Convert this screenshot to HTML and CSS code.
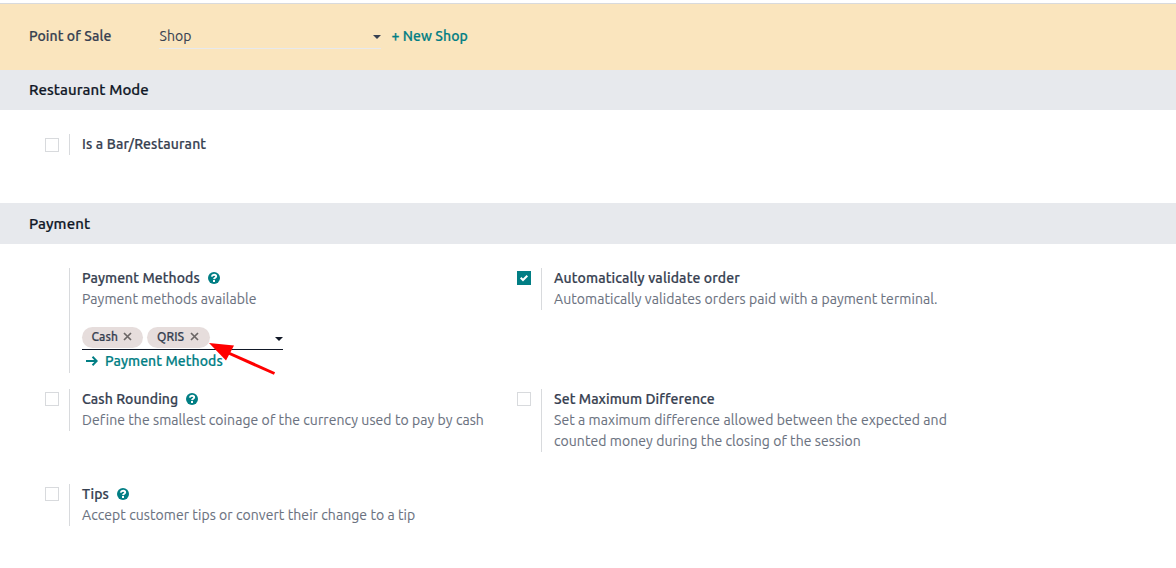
FILE: index.html
```
<!DOCTYPE html>
<html lang="en">
<head>
<meta charset="utf-8">
<title>Point of Sale Settings</title>
<link rel="stylesheet" href="styles.css">
</head>
<body>
<svg class="defs" aria-hidden="true">
  <symbol id="help" viewBox="0 0 12 12">
    <circle cx="6" cy="6" r="6" fill="#017e84"/>
    <path d="M3.7 4.600C4 3.300 4.900 2.800 6.100 2.800C7.400 2.800 8.200 3.500 8.200 4.500C8.200 5.800 6.200 5.800 6 7.200" fill="none" stroke="#fff" stroke-width="1.900"/>
    <path d="M5 8h2v2H5z" fill="#fff"/>
  </symbol>
  <symbol id="caret" viewBox="0 0 8 4"><path d="M0 0h8L4 4z" fill="currentColor"/></symbol>
  <symbol id="cross" viewBox="0 0 9 9"><path d="M1 1l7 7M8 1l-7 7" stroke="currentColor" stroke-width="1.700"/></symbol>
</svg>
<main class="settings">
  <header class="shop-bar">
    <label class="title shop-label">Point of Sale</label>
    <div class="select"><span>Shop</span><svg class="caret"><use href="#caret"/></svg></div>
    <a class="link">+ New Shop</a>
  </header>

  <h2 class="section-title">Restaurant Mode</h2>
  <section class="grid restaurant">
    <div class="setting">
      <div class="check-col"><span class="checkbox low"></span></div>
      <div class="body"><div class="title wide">Is a Bar/Restaurant</div></div>
    </div>
  </section>

  <h2 class="section-title tall">Payment</h2>
  <section class="grid payment">
    <div class="setting">
      <div class="check-col"></div>
      <div class="body">
        <div class="title">Payment Methods<svg class="help"><use href="#help"/></svg></div>
        <div class="desc">Payment methods available</div>
        <div class="tags">
          <span class="tag cash">Cash<svg class="cross"><use href="#cross"/></svg></span>
          <span class="tag qris">QRIS<svg class="cross"><use href="#cross"/></svg></span>
          <svg class="caret"><use href="#caret"/></svg>
          <svg class="pointer" viewBox="0 0 68 34"><path d="M15 8l50.500 22.500" stroke="#f00" stroke-width="3"/><path d="M0 0L25 2.500L17 17.500z" fill="#f00"/></svg>
        </div>
        <a class="link methods-link"><svg class="arrow" viewBox="0 0 12 10"><path d="M0 5h11M6.500 0.800l4.200 4.200l-4.200 4.200" fill="none" stroke="currentColor" stroke-width="2"/></svg>Payment Methods</a>
      </div>
    </div>
    <div class="setting">
      <div class="check-col"><span class="checkbox checked"><svg viewBox="0 0 14 14"><path d="M3.700 6.700l2.300 2.300l4.300-4.300" fill="none" stroke="#fff" stroke-width="2"/></svg></span></div>
      <div class="body">
        <div class="title wide">Automatically validate order</div>
        <div class="desc">Automatically validates orders paid with a payment terminal.</div>
      </div>
    </div>
    <div class="setting">
      <div class="check-col"><span class="checkbox"></span></div>
      <div class="body">
        <div class="title">Cash Rounding<svg class="help"><use href="#help"/></svg></div>
        <div class="desc">Define the smallest coinage of the currency used to pay by cash</div>
      </div>
    </div>
    <div class="setting">
      <div class="check-col"><span class="checkbox"></span></div>
      <div class="body">
        <div class="title">Set Maximum Difference</div>
        <div class="desc">Set a maximum difference allowed between the expected and<br>counted money during the closing of the session</div>
      </div>
    </div>
    <div class="setting">
      <div class="check-col"><span class="checkbox"></span></div>
      <div class="body">
        <div class="title">Tips<svg class="help"><use href="#help"/></svg></div>
        <div class="desc">Accept customer tips or convert their change to a tip</div>
      </div>
    </div>
  </section>
</main>
</body>
</html>
```
FILE: styles.css
```
* { box-sizing: border-box; }
body { margin: 0; background: #fff; color: #374151; font: 14px/21px Ubuntu, "Noto Sans", sans-serif; overflow: hidden; -webkit-text-stroke: 0.1px currentColor; }
svg { display: block; flex: none; }
.defs { display: none; }
.settings { padding-top: 3px; }
.shop-bar { display: flex; height: 67px; padding: 22px 29px 0; border-top: 1px solid #d8dadd; background: #fae5be; white-space: nowrap; }
.shop-label { width: 130px; }
.title, .link, .section-title, .tag { font-weight: 500; letter-spacing: 0.08px; -webkit-text-stroke: 0.2px currentColor; }
.title { display: flex; align-items: center; height: 21px; white-space: nowrap; }
.title.wide { letter-spacing: 0.14px; }
.link { color: #017e84; }
.select { display: flex; justify-content: space-between; align-items: center; width: 222px; height: 23px; margin-right: 10.5px; padding: 0 0 2px 0.5px; border-bottom: 1px solid #e7e9ed; letter-spacing: 0.1px; }
.caret { width: 8px; height: 4px; margin-top: 2px; }
.section-title { height: 40px; margin: 0; padding: 0 29px; background: #e7e9ed; color: #111827; font-size: 15px; line-height: 40px; }
.section-title.tall { height: 41px; line-height: 41px; }
.grid { display: grid; grid-template-columns: 472px 472px; padding-left: 29px; align-items: start; white-space: nowrap; }
.restaurant { height: 93px; padding-top: 24px; }
.payment { padding-top: 24px; grid-template-rows: 121px 95px 42px; }
.setting { display: flex; }
.check-col { width: 40px; padding: 3px 0 0 16px; }
.checkbox { display: block; width: 14px; height: 14px; border: 1px solid #d8dadd; }
.checkbox.low { margin-top: 1px; }
.checkbox.checked { border: 0; background: #017e84; }
.body { border-left: 1px solid #d8dadd; padding-left: 12px; }
.desc { min-height: 21px; color: #6b7280; letter-spacing: 0.07px; }
.help { width: 12px; height: 12px; margin: 0 0 1px 8px; }
.tags { position: relative; display: flex; gap: 4px; width: 201px; height: 24px; margin-top: 16px; border-bottom: 1px solid #111827; }
.tag { display: flex; align-items: center; height: 21px; margin-top: 1px; padding: 0 11px 1px 9.5px; border-radius: 11px; background: #e6dddc; font-size: 12px; line-height: 20px; }
.tag.cash { width: 61px; }
.tag.qris { width: 63px; padding-left: 10px; }
.cross { width: 9px; height: 9px; margin: 0 0 2px auto; color: #6b6666; }
.tags .caret { margin: 11px 0 0 auto; color: #111827; }
.tags .pointer { position: absolute; left: 127px; top: 17px; width: 68px; height: 34px; }
.methods-link { display: flex; align-items: center; height: 23px; padding-left: 4px; }
.arrow { width: 12px; height: 10px; margin: 0 7px 1px 0; }
```
